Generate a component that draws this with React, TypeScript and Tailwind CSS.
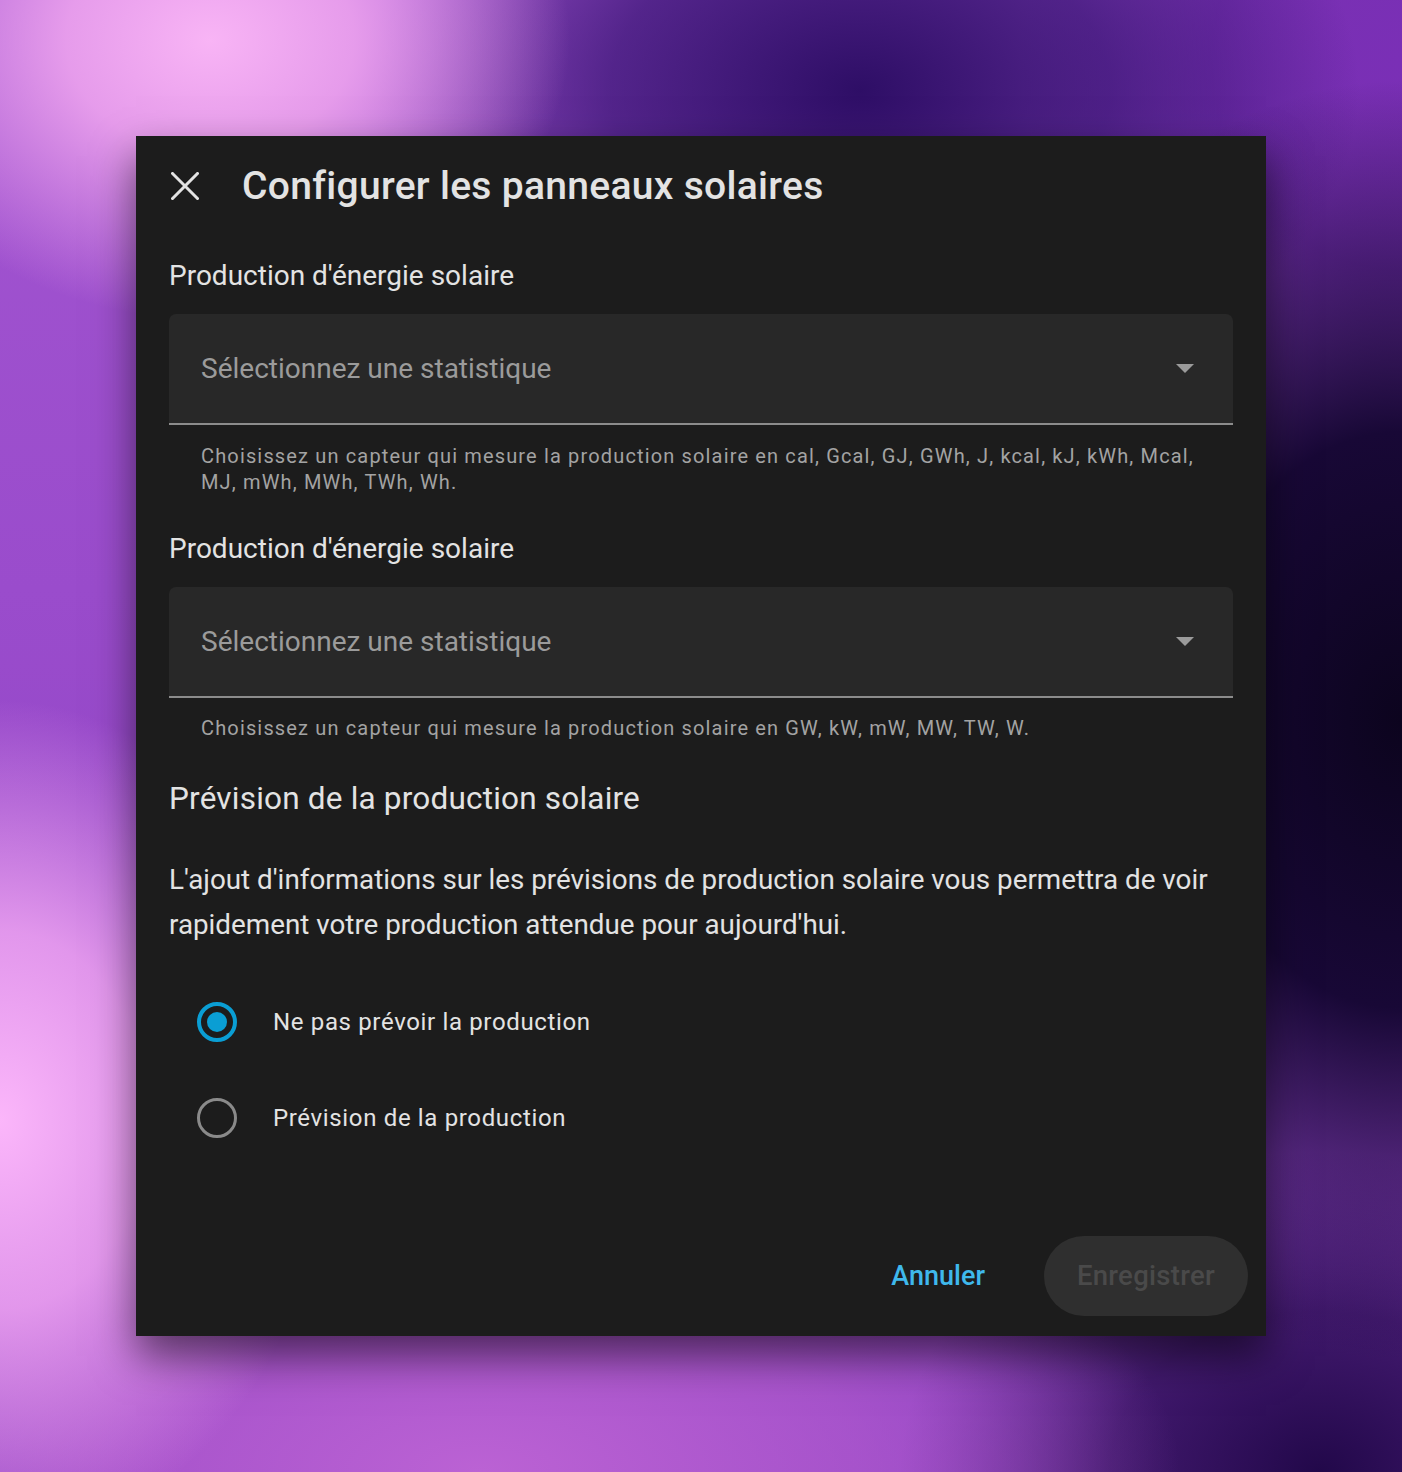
function StatSelect() {
  return (
    <div className="h-[111px] rounded-t-[7px] bg-[#282828] border-b-2 border-[#8c8c8c] flex items-center justify-between pl-8 pr-10">
      <span className="text-[28px] text-[#9b9b9b]">Sélectionnez une statistique</span>
      <svg width="18" height="10" viewBox="0 0 18 10" className="mr-[-1px]">
        <path d="M0 0 L18 0 L9 9 Z" fill="#9b9b9b" />
      </svg>
    </div>
  )
}

function Radio({ checked, label }: { checked?: boolean; label: string }) {
  return (
    <div className="flex items-center h-[96px] pl-7">
      <div
        className={
          checked
            ? "w-10 h-10 rounded-full border-[4px] border-[#0a9ed4] flex items-center justify-center"
            : "w-10 h-10 rounded-full border-[3px] border-[#8a8a8a]"
        }
      >
        {checked && <div className="w-5 h-5 rounded-full bg-[#0a9ed4]" />}
      </div>
      <span className="ml-[36px] text-[24px] tracking-[0.65px] text-[#e3e3e3]">{label}</span>
    </div>
  )
}

export default function App() {
  return (
    <div
      className="w-[1402px] h-[1472px] flex items-start justify-center pt-[136px] overflow-hidden bg-[#8a3fc2] bg-[radial-gradient(ellipse_360px_280px_at_210px_40px,#f8b4f5_0%,rgba(242,168,240,0.85)_40%,transparent_100%),radial-gradient(ellipse_330px_420px_at_0px_1120px,#fbb6fa_0%,rgba(245,170,245,0.8)_45%,transparent_100%),radial-gradient(ellipse_480px_640px_at_1402px_720px,#0c041e_0%,#180836_45%,transparent_100%),radial-gradient(ellipse_500px_330px_at_860px_90px,#2e0e66_0%,rgba(50,16,110,0.7)_50%,transparent_100%),radial-gradient(ellipse_700px_320px_at_480px_1472px,#bb62d4_0%,rgba(185,95,210,0.6)_55%,transparent_100%),radial-gradient(ellipse_420px_320px_at_1320px_1472px,#22084a_0%,rgba(34,8,74,0.7)_50%,transparent_100%),radial-gradient(ellipse_380px_420px_at_1402px_60px,#7a2fb6_0%,rgba(110,40,170,0.8)_50%,transparent_100%),linear-gradient(180deg,#a255d0_0%,#9a4ccc_40%,#8a40c0_100%)]"
      style={{ fontFamily: "Roboto, 'Noto Sans', sans-serif" }}
    >
      <div className="w-[1130px] h-[1200px] bg-[#1c1c1c] shadow-[0_20px_40px_rgba(0,0,0,0.55)] flex flex-col">
        {/* header */}
        <div className="flex items-center h-[100px] pl-[35px]">
          <svg width="28" height="28" viewBox="0 0 28 28">
            <path d="M1.5 1.5 L26.5 26.5 M26.5 1.5 L1.5 26.5" stroke="#e3e3e3" strokeWidth="3" strokeLinecap="square" />
          </svg>
          <h1 className="ml-[43px] text-[39px] font-medium text-[#e3e3e3] tracking-[0.3px]">
            Configurer les panneaux solaires
          </h1>
        </div>

        <div className="flex flex-col px-[33px]">
          <div className="text-[28px] text-[#e3e3e3] mt-[20px] leading-[40px]">Production d'énergie solaire</div>
          <div className="mt-[18px]">
            <StatSelect />
          </div>
          <p className="px-8 mt-[18px] text-[20px] leading-[26px] tracking-[1.15px] text-[#a3a3a3]">
            Choisissez un capteur qui mesure la production solaire en cal, Gcal, GJ, GWh, J, kcal, kJ, kWh, Mcal,
            MJ, mWh, MWh, TWh, Wh.
          </p>

          <div className="text-[28px] text-[#e3e3e3] mt-[34px] leading-[40px]">Production d'énergie solaire</div>
          <div className="mt-[18px]">
            <StatSelect />
          </div>
          <p className="px-8 mt-[17px] text-[20px] leading-[26px] tracking-[1.15px] text-[#a3a3a3]">
            Choisissez un capteur qui mesure la production solaire en GW, kW, mW, MW, TW, W.
          </p>

          <h2 className="text-[31.5px] text-[#e3e3e3] mt-[36px] leading-[44px] tracking-[0.2px]">
            Prévision de la production solaire
          </h2>
          <p className="text-[27.8px] text-[#e3e3e3] mt-[36px] leading-[45px]">
            L'ajout d'informations sur les prévisions de production solaire vous permettra de voir rapidement votre
            production attendue pour aujourd'hui.
          </p>

          <div className="mt-[27px] flex flex-col">
            <Radio checked label="Ne pas prévoir la production" />
            <Radio label="Prévision de la production" />
          </div>
        </div>

        <div className="mt-auto mb-[20px] flex items-center justify-end pr-[18px]">
          <button className="text-[27px] font-medium text-[#3fb8ec] px-4 h-[80px]">Annuler</button>
          <button className="ml-[43px] w-[204px] h-[80px] rounded-full bg-[#2f2f2f] text-[27.5px] font-medium text-[#4a4a4a] tracking-[0.3px]">
            Enregistrer
          </button>
        </div>
      </div>
    </div>
  )
}
